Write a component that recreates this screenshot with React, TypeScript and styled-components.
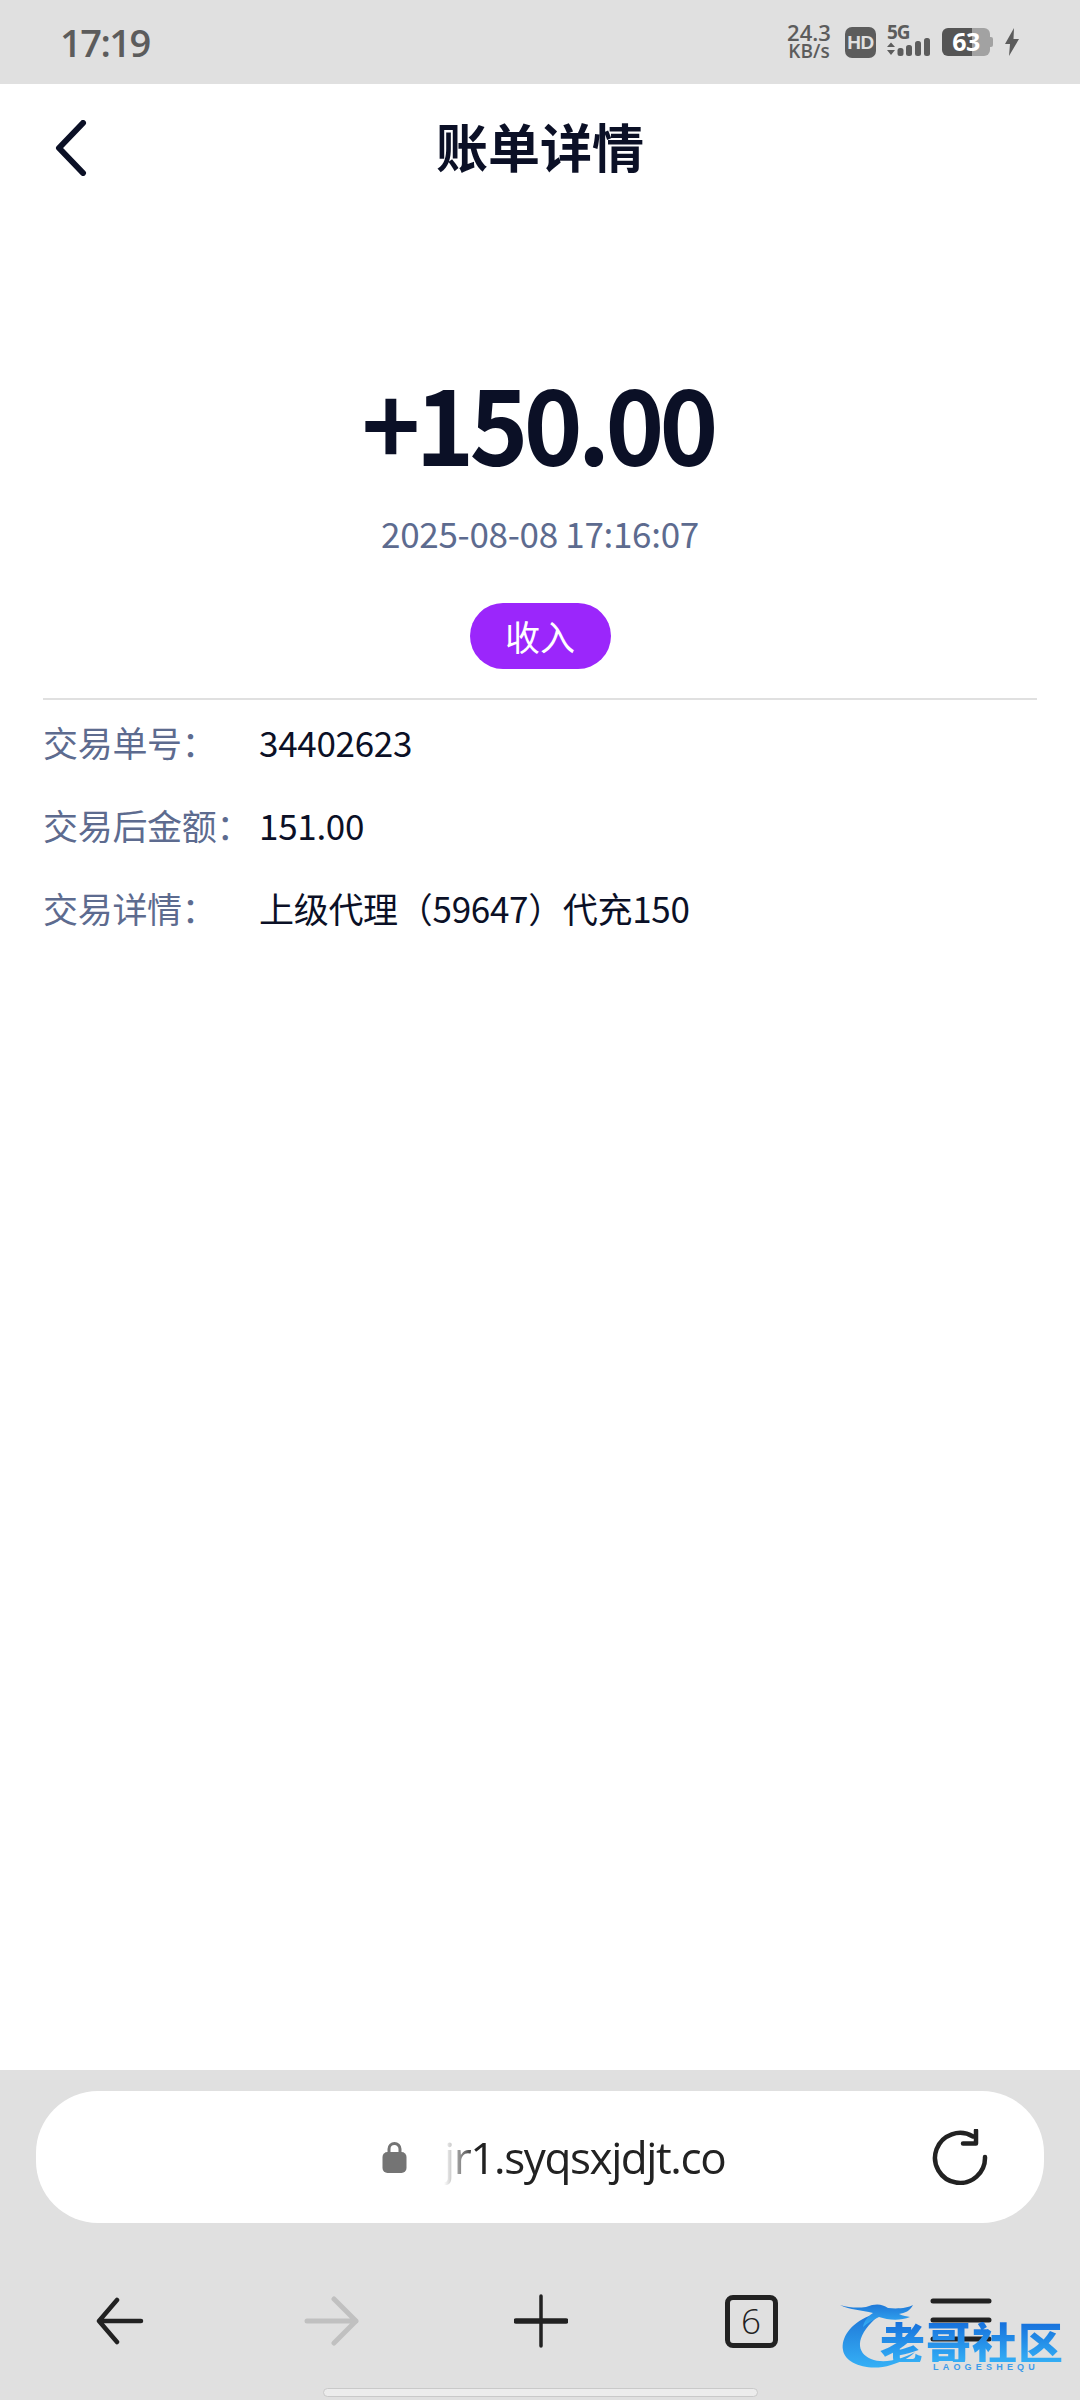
import React from "react";
import styled, { createGlobalStyle } from "styled-components";

const CJK = `"Noto Sans CJK SC", "Noto Sans", sans-serif`;

const Global = createGlobalStyle`
  html, body { margin: 0; padding: 0; background: #fff; }
  * { box-sizing: border-box; }
`;

const Page = styled.div`
  width: 1080px;
  height: 2400px;
  display: flex;
  flex-direction: column;
  position: relative;
  overflow: hidden;
  font-family: ${CJK};
  background: #fff;
`;

const StatusBar = styled.div`
  height: 84px;
  background: #e0e0e0;
  display: flex;
  align-items: center;
  padding: 0 61px 0 60px;
  color: #5c5c5c;
`;

const Clock = styled.div`
  font-family: "Open Sans", sans-serif;
  font-size: 38px;
  font-weight: 600;
  letter-spacing: -1.5px;
  line-height: 84px;
  flex: 1;
`;

const StatusIcons = styled.div`
  display: flex;
  align-items: center;
  height: 40px;
`;

const Speed = styled.div`
  width: 48px;
  margin-right: 12px;
  display: flex;
  flex-direction: column;
  align-items: center;
  font-family: "Open Sans", sans-serif;
  font-weight: 600;
  line-height: 19px;
  font-size: 22px;
  white-space: nowrap;
`;

const SpeedUnit = styled.span`
  font-size: 19px;
  line-height: 19px;
`;

const HdBadge = styled.div`
  width: 31px;
  height: 31px;
  border-radius: 7px;
  background: #5c5c5c;
  color: #e0e0e0;
  font-family: "Liberation Sans", sans-serif;
  font-size: 19px;
  font-weight: 700;
  line-height: 31px;
  text-align: center;
  letter-spacing: -0.5px;
  margin-right: 11px;
`;

const SignalBox = styled.div`
  position: relative;
  width: 45px;
  height: 32px;
  margin-right: 10px;
`;

const FiveG = styled.span`
  position: absolute;
  left: 0;
  top: -5px;
  font-family: "Open Sans", sans-serif;
  font-size: 19px;
  font-weight: 700;
  letter-spacing: -1px;
  line-height: 22px;
`;

const Battery = styled.div`
  position: relative;
  width: 48px;
  height: 28px;
  border-radius: 6px;
  background: linear-gradient(90deg, #555 0 62%, #a2a2a2 62% 100%);
  color: #fff;
  font-family: "Open Sans", sans-serif;
  font-size: 25px;
  font-weight: 700;
  line-height: 27px;
  text-align: center;
  letter-spacing: -0.5px;
  margin-right: 15px;

  &::after {
    content: "";
    position: absolute;
    right: -3px;
    top: 9px;
    width: 3px;
    height: 10px;
    border-radius: 0 2px 2px 0;
    background: #a2a2a2;
  }
`;

const Header = styled.header`
  height: 128px;
  display: grid;
  grid-template-columns: 220px 1fr 220px;
  align-items: center;
`;

const BackButton = styled.div`
  padding-left: 52px;
  display: flex;
  align-items: center;
`;

const Title = styled.h1`
  margin: 0;
  text-align: center;
  font-size: 52px;
  font-weight: 700;
  line-height: 70px;
  color: #0b1026;
  transform: translateY(-2px);
`;

const Summary = styled.section`
  display: flex;
  flex-direction: column;
  align-items: center;
  padding-top: 148px;
`;

const Amount = styled.div`
  font-size: 105px;
  font-weight: 700;
  line-height: 120px;
  letter-spacing: -5px;
  padding-right: 5px;
  color: #0b1026;
  transform: scaleX(0.95);
`;

const DateText = styled.div`
  margin-top: 29px;
  font-size: 35px;
  letter-spacing: -0.3px;
  line-height: 48px;
  color: #5d6b8f;
`;

const TypeBadge = styled.div`
  margin-top: 46px;
  width: 141px;
  height: 66px;
  border-radius: 33px;
  background: #9b26fb;
  color: #fff;
  font-size: 35px;
  line-height: 66px;
  text-align: center;
`;

const Divider = styled.hr`
  margin: 29px 43px 0;
  border: 0;
  height: 2px;
  background: #e0e0e0;
`;

const Details = styled.dl`
  margin: 17px 0 0;
  padding: 0 43px;
  display: flex;
  flex-direction: column;
  gap: 33px;
`;

const DetailRow = styled.div`
  display: grid;
  grid-template-columns: 216px 1fr;
  font-size: 35px;
  line-height: 50px;
  letter-spacing: -0.3px;
`;

const DetailLabel = styled.dt`
  color: #5d6b8f;
`;

const DetailValue = styled.dd`
  margin: 0;
  color: #0b1026;
`;

const Spacer = styled.div`
  flex: 1;
`;

const BrowserBar = styled.footer`
  height: 330px;
  background: #e0e0e0;
  padding-top: 21px;
  display: flex;
  flex-direction: column;
`;

const AddressPill = styled.div`
  margin: 0 36px;
  height: 132px;
  border-radius: 62px;
  background: #fff;
  display: flex;
  align-items: center;
  padding-left: 346px;
  padding-right: 56px;
`;

const UrlText = styled.span`
  margin-left: 37px;
  flex: 1;
  font-family: "Open Sans", sans-serif;
  font-size: 44px;
  letter-spacing: -1.4px;
  color: #222;
  -webkit-mask-image: linear-gradient(90deg, transparent 0, #000 32px);
  mask-image: linear-gradient(90deg, transparent 0, #000 32px);
`;

const NavRow = styled.nav`
  margin-top: 48px;
  height: 100px;
  padding: 0 16px;
  display: grid;
  grid-template-columns: repeat(5, 210px);
`;

const NavCell = styled.div`
  display: flex;
  align-items: center;
  justify-content: center;
`;

const TabCount = styled.div`
  width: 53px;
  height: 53px;
  border: 5px solid #222;
  border-radius: 8px;
  color: #222;
  font-family: "Open Sans", sans-serif;
  font-size: 35px;
  font-weight: 300;
  line-height: 42px;
  text-align: center;
`;

const HomeHandle = styled.div`
  margin: 17px auto 0;
  width: 435px;
  height: 9px;
  border-radius: 5px;
  background: #ececec;
  border: 1px solid #c9c9c9;
`;

/* Community mark laid over the toolbar's lower right corner */
const Mark = styled.div`
  position: absolute;
  left: 840px;
  top: 2302px;
  width: 230px;
  height: 72px;
`;

const MarkName = styled.span`
  position: absolute;
  left: 40px;
  top: 20px;
  font-size: 45px;
  font-weight: 900;
  line-height: 40px;
  letter-spacing: 1px;
  white-space: nowrap;
  background: linear-gradient(180deg, #1670dc, #33aef5);
  -webkit-background-clip: text;
  background-clip: text;
  color: transparent;
  filter: blur(0.6px);
`;

const MarkSub = styled.span`
  position: absolute;
  left: 93px;
  top: 60px;
  font-family: "Liberation Sans", sans-serif;
  font-size: 9px;
  font-weight: 700;
  letter-spacing: 4.2px;
  line-height: 10px;
  color: #3d9be9;
  white-space: nowrap;
`;

const MarkArt = styled.svg`
  position: absolute;
  left: 0;
  top: 0;
`;

const IconStroke = { fill: "none", strokeLinecap: "round", strokeLinejoin: "round" } as const;

export default function App() {
  return (
    <Page>
      <Global />
      <StatusBar>
        <Clock>17:19</Clock>
        <StatusIcons>
          <Speed>
            24.3
            <SpeedUnit>KB/s</SpeedUnit>
          </Speed>
          <HdBadge>HD</HdBadge>
          <SignalBox>
            <FiveG>5G</FiveG>
            <svg width="45" height="32" viewBox="0 0 45 32">
              <path d="M0 21 4 16.5l4 4.5zM0 24h8l-4 5z" fill="#5c5c5c" />
              <rect x="10.5" y="22" width="6" height="8" rx="2.5" fill="#5c5c5c" />
              <rect x="19" y="19" width="6" height="11" rx="2.5" fill="#5c5c5c" />
              <rect x="28" y="15" width="6" height="15" rx="2.5" fill="#5c5c5c" />
              <rect x="37" y="12" width="6" height="18" rx="2.5" fill="#5c5c5c" />
            </svg>
          </SignalBox>
          <Battery>63</Battery>
          <svg width="14" height="28" viewBox="0 0 14 28">
            <path d="M9 0 0 16h5l-1 12 10-17H8.5z" fill="#5c5c5c" />
          </svg>
        </StatusIcons>
      </StatusBar>

      <Header>
        <BackButton>
          <svg width="36" height="56" viewBox="0 0 36 56">
            <path d="M31 3 7 28l24 25" stroke="#0b1026" strokeWidth="6" {...IconStroke} />
          </svg>
        </BackButton>
        <Title>账单详情</Title>
      </Header>

      <Summary>
        <Amount>+150.00</Amount>
        <DateText>2025-08-08 17:16:07</DateText>
        <TypeBadge>收入</TypeBadge>
      </Summary>
      <Divider />
      <Details>
        <DetailRow>
          <DetailLabel>交易单号：</DetailLabel>
          <DetailValue>34402623</DetailValue>
        </DetailRow>
        <DetailRow>
          <DetailLabel>交易后金额：</DetailLabel>
          <DetailValue>151.00</DetailValue>
        </DetailRow>
        <DetailRow>
          <DetailLabel>交易详情：</DetailLabel>
          <DetailValue>上级代理（59647）代充150</DetailValue>
        </DetailRow>
      </Details>
      <Spacer />

      <BrowserBar>
        <AddressPill>
          <svg width="25" height="32" viewBox="0 0 25 32">
            <path d="M7 14V8a5.5 5.5 0 0 1 11 0v6" fill="none" stroke="#747474" strokeWidth="3" />
            <rect x="0.5" y="11" width="24" height="21" rx="5" fill="#747474" />
          </svg>
          <UrlText>jr1.syqsxjdjt.co</UrlText>
          <svg width="56" height="56" viewBox="0 0 56 56">
            <path d="M41 7.5A25 25 0 1 0 53 28" stroke="#222" strokeWidth="4.5" {...IconStroke} />
            <path d="M44 1.5v13H31" stroke="#222" strokeWidth="4.5" {...IconStroke} />
          </svg>
        </AddressPill>

        <NavRow>
          <NavCell>
            <svg width="50" height="48" viewBox="0 0 50 48">
              <path d="M21 3 3 24l18 21M3 24h42" stroke="#222" strokeWidth="4.5" {...IconStroke} />
            </svg>
          </NavCell>
          <NavCell>
            <svg width="56" height="50" viewBox="0 0 56 50">
              <path d="M31 3l22 22-22 22M53 25H4" stroke="#c0c0c0" strokeWidth="5" {...IconStroke} />
            </svg>
          </NavCell>
          <NavCell>
            <svg width="54" height="54" viewBox="0 0 54 54">
              <path d="M27 2v50" stroke="#222" strokeWidth="3.5" {...IconStroke} />
              <path d="M2 27h50" stroke="#222" strokeWidth="5.5" {...IconStroke} />
            </svg>
          </NavCell>
          <NavCell>
            <TabCount>6</TabCount>
          </NavCell>
          <NavCell>
            <svg width="62" height="50" viewBox="0 0 62 50">
              <path d="M3 5h56M3 24h56M3 43h56" stroke="#222" strokeWidth="5" {...IconStroke} />
            </svg>
          </NavCell>
        </NavRow>
        <HomeHandle />
      </BrowserBar>

      <Mark>
        <MarkArt width="230" height="72" viewBox="0 0 230 72">
          <defs>
            <linearGradient id="dragon" x1="0" y1="0" x2="0" y2="1">
              <stop offset="0" stopColor="#1f78d8" />
              <stop offset="1" stopColor="#35b0f6" />
            </linearGradient>
          </defs>
          <path
            d="M29 14C10 22 1 36 3 48c2 14 26 22 48 15 10-3 18-7 24-13-14 8-32 12-44 7C17 51 14 36 36 16z"
            fill="url(#dragon)"
          />
          <path
            d="M0 3c10 3 18 3 26 2 10-4 16-3 22 1 10 1 20 0 25-3-3 6-8 8-14 9 4 2 8 2 11 3-10 4-22 3-31 0-6 3-12 6-16 10 1-6 5-11 10-14C22 8 10 8 0 3z"
            fill="url(#dragon)"
          />
        </MarkArt>
        <MarkName>老哥社区</MarkName>
        <MarkSub>LAOGESHEQU</MarkSub>
      </Mark>
    </Page>
  );
}
